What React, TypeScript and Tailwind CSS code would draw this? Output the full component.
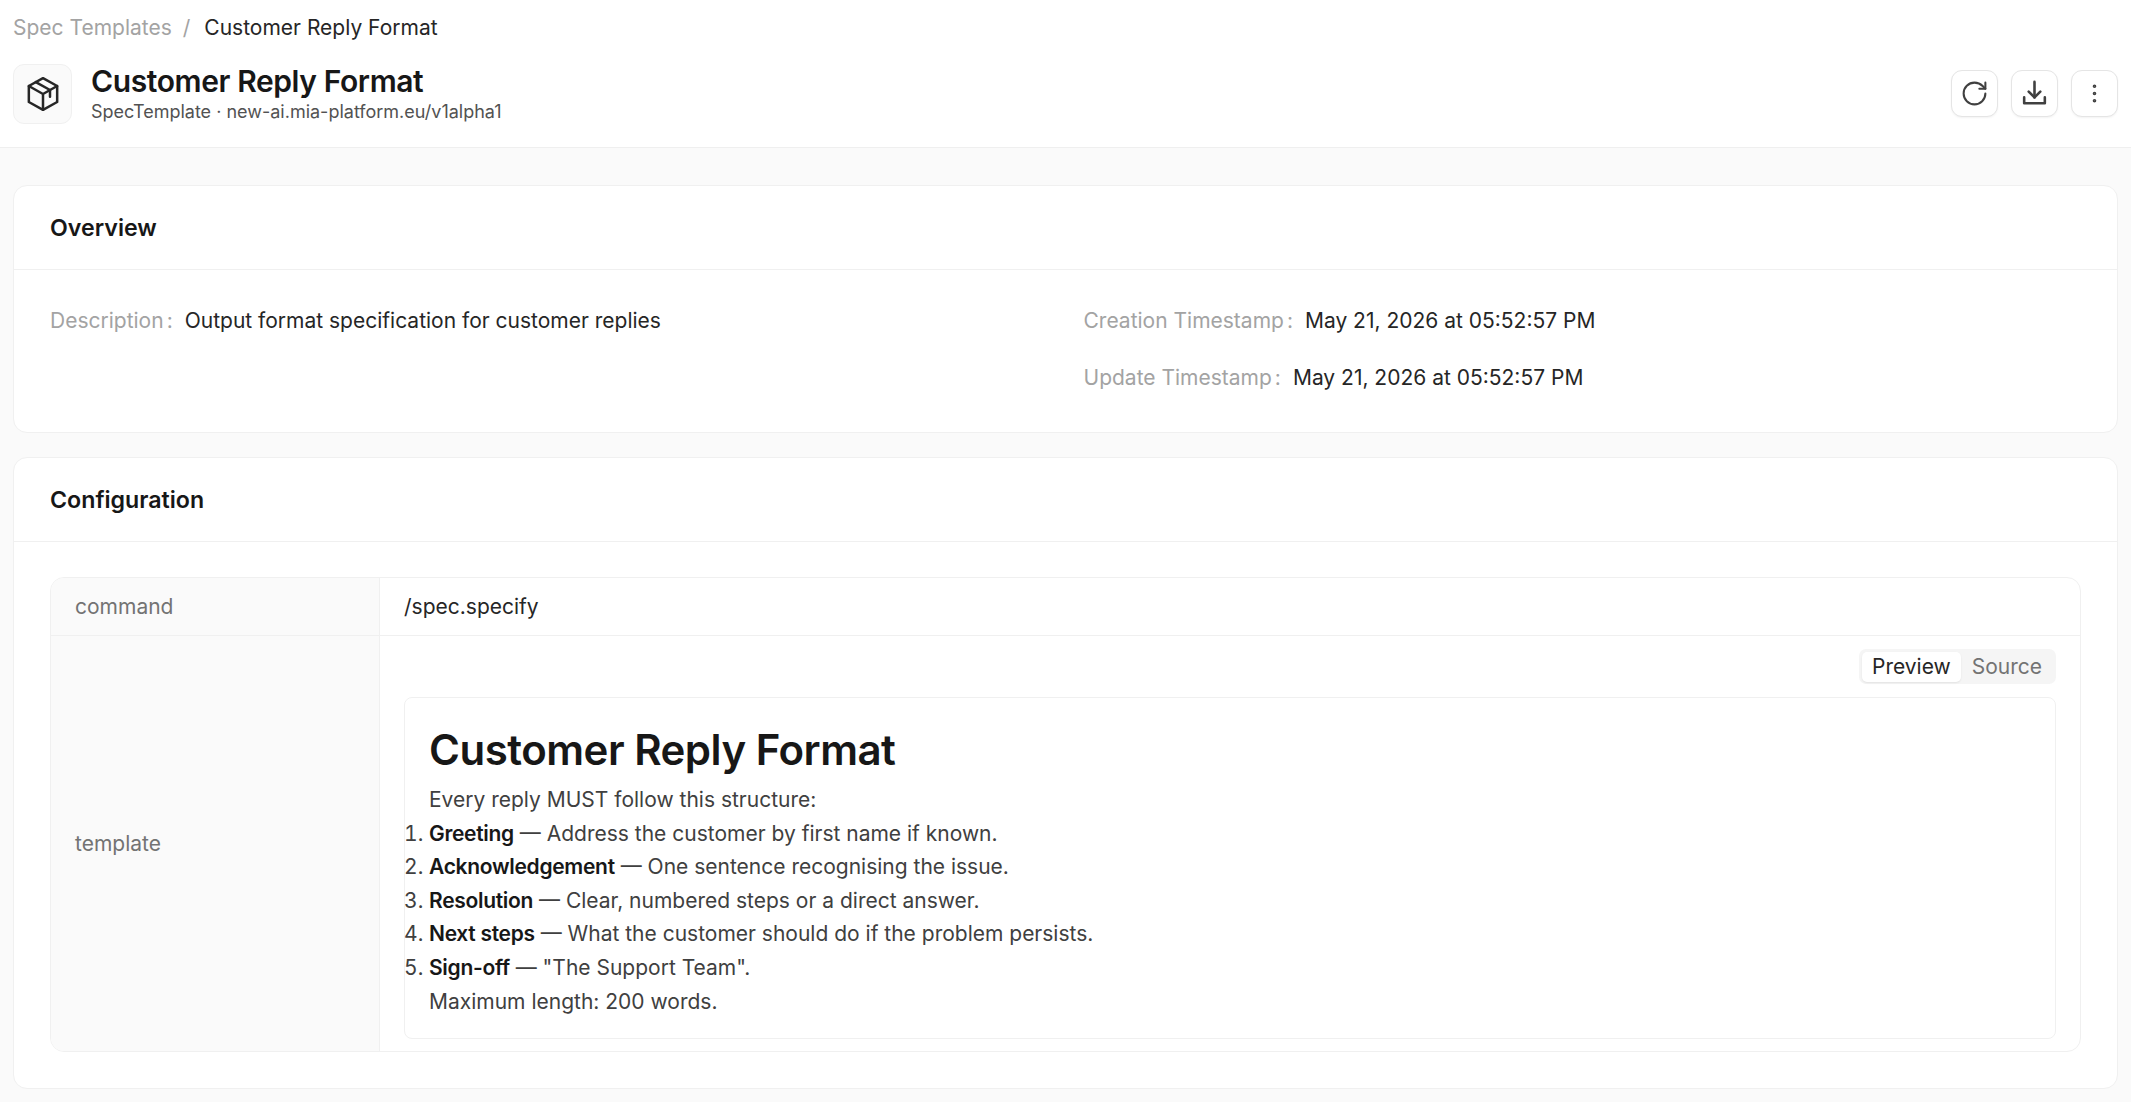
import { RotateCw, EllipsisVertical } from "lucide-react";

function IconButton({ children }: { children: React.ReactNode }) {
  return (
    <button className="w-[47px] h-[47px] flex items-center justify-center rounded-[11px] border border-[#e5e5e5] bg-white text-[#404040] shadow-[0_1px_2px_rgba(0,0,0,0.05)]">
      {children}
    </button>
  );
}

function Meta({ label, value }: { label: string; value: string }) {
  return (
    <div className="flex items-center h-[27px]">
      <span className="text-[#a3a3a3]">{label}</span>
      <span className="text-[#a3a3a3] ml-[3px] mr-[12px]">:</span>
      <span className="text-[#262626]">{value}</span>
    </div>
  );
}

function Item({ b, t }: { b: string; t: string }) {
  return (
    <li className="leading-[33.6px] text-[#404040]">
      <strong className="font-semibold tracking-[-0.3px] text-[#171717]">{b}</strong> — {t}
    </li>
  );
}

export default function App() {
  return (
    <div className="min-h-[1102px] bg-[#fafafa] font-['Inter',sans-serif] text-[21px] leading-[27px] text-[#262626] overflow-hidden">
      <header className="h-[148px] bg-white border-b border-[#efefef] px-[13px] pt-[13px]">
        <nav className="flex items-center h-[28px]">
          <span className="text-[#a3a3a3]">Spec Templates</span>
          <span className="text-[#a3a3a3] ml-[11px] mr-[14px]">/</span>
          <span className="text-[#262626]">Customer Reply Format</span>
        </nav>
        <div className="flex items-center justify-between mt-[22px]">
          <div className="flex items-center gap-[19px]">
            <div className="w-[59px] h-[60px] flex items-center justify-center rounded-[11px] border border-[#f0f0f0] bg-[#fafafa] text-[#262626]">
              <svg width="40" height="40" viewBox="0 0 24 24" fill="none" stroke="currentColor" strokeWidth="1.5" strokeLinejoin="round" strokeLinecap="round">
                <path d="M12 2.5 20.5 7.2v9.6L12 21.5l-8.5-4.7V7.2Z" />
                <path d="M3.5 7.2 12 12l8.5-4.8M12 12v9.5" />
                <path d="M7.7 4.9l8.5 4.7v4" />
              </svg>
            </div>
            <div className="flex flex-col">
              <h1 className="text-[30px] leading-[36px] font-semibold tracking-[-0.4px] text-[#171717]">Customer Reply Format</h1>
              <p className="text-[18px] leading-[24px] mt-[1px] text-[#525252]">SpecTemplate · new-ai.mia-platform.eu/v1alpha1</p>
            </div>
          </div>
          <div className="flex items-center gap-[13px]">
            <IconButton><RotateCw size={29} strokeWidth={1.7} /></IconButton>
            <IconButton>
              <svg width="31" height="31" viewBox="0 0 24 24" fill="none" stroke="currentColor" strokeWidth="2" strokeLinejoin="round" strokeLinecap="round">
                <path d="M4 15v4.5h16V15" />
                <path d="M12 3v12" />
                <path d="M7.5 10.5 12 15l4.5-4.5" />
              </svg>
            </IconButton>
            <IconButton><EllipsisVertical size={25} strokeWidth={1.5} /></IconButton>
          </div>
        </div>
      </header>

      <main className="px-[13px] pt-[37px] flex flex-col gap-[24px]">
        <section className="bg-white border border-[#f0f0f0] rounded-[14px] h-[248px]">
          <div className="h-[84px] flex items-center px-[36px] pt-[1px] border-b border-[#f0f0f0]">
            <h2 className="text-[23.2px] font-semibold text-[#171717]">Overview</h2>
          </div>
          <div className="grid grid-cols-2 px-[36px] pt-[37px]">
            <Meta label="Description" value="Output format specification for customer replies" />
            <div className="flex flex-col gap-[30px] pl-[18px]">
              <Meta label="Creation Timestamp" value="May 21, 2026 at 05:52:57 PM" />
              <Meta label="Update Timestamp" value="May 21, 2026 at 05:52:57 PM" />
            </div>
          </div>
        </section>

        <section className="bg-white border border-[#f0f0f0] rounded-[14px] h-[632px]">
          <div className="h-[84px] flex items-center px-[36px] pt-[1px] border-b border-[#f0f0f0]">
            <h2 className="text-[23.2px] font-semibold text-[#171717]">Configuration</h2>
          </div>
          <div className="mx-[36px] mt-[35px] border border-[#f0f0f0] rounded-[14px] overflow-hidden">
            <div className="flex h-[58px] border-b border-[#f0f0f0]">
              <div className="w-[329px] shrink-0 bg-[#fafafa] border-r border-[#f0f0f0] flex items-center px-[24px] text-[#737373]">command</div>
              <div className="flex-1 flex items-center px-[24px] text-[#262626]">/spec.specify</div>
            </div>
            <div className="flex h-[415px]">
              <div className="w-[329px] shrink-0 bg-[#fafafa] border-r border-[#f0f0f0] flex items-center px-[24px] text-[#737373]">template</div>
              <div className="flex-1 min-w-0 px-[24px] pt-[13px] flex flex-col">
                <div className="flex justify-end">
                  <div className="flex items-center h-[35px] p-[3px] rounded-[7px] bg-[#f5f5f5]">
                    <span className="h-[30px] px-[10px] flex items-center rounded-[5px] bg-white text-[#262626] shadow-[0_1px_2px_rgba(0,0,0,0.08)]">Preview</span>
                    <span className="h-[30px] px-[11px] flex items-center text-[#737373]">Source</span>
                  </div>
                </div>
                <div className="mt-[13px] h-[342px] border border-[#f0f0f0] rounded-[8px] px-[24px] pt-[28px]">
                  <h3 className="text-[42px] leading-[48px] font-semibold tracking-[-0.5px] text-[#171717]">Customer Reply Format</h3>
                  <p className="mt-[9px] leading-[33.6px] text-[#404040]">Every reply MUST follow this structure:</p>
                  <ol className="list-decimal">
                    <Item b="Greeting" t="Address the customer by first name if known." />
                    <Item b="Acknowledgement" t="One sentence recognising the issue." />
                    <Item b="Resolution" t="Clear, numbered steps or a direct answer." />
                    <Item b="Next steps" t="What the customer should do if the problem persists." />
                    <Item b="Sign-off" t={'"The Support Team".'} />
                  </ol>
                  <p className="leading-[33.6px] text-[#404040]">Maximum length: 200 words.</p>
                </div>
              </div>
            </div>
          </div>
        </section>
      </main>
    </div>
  );
}
